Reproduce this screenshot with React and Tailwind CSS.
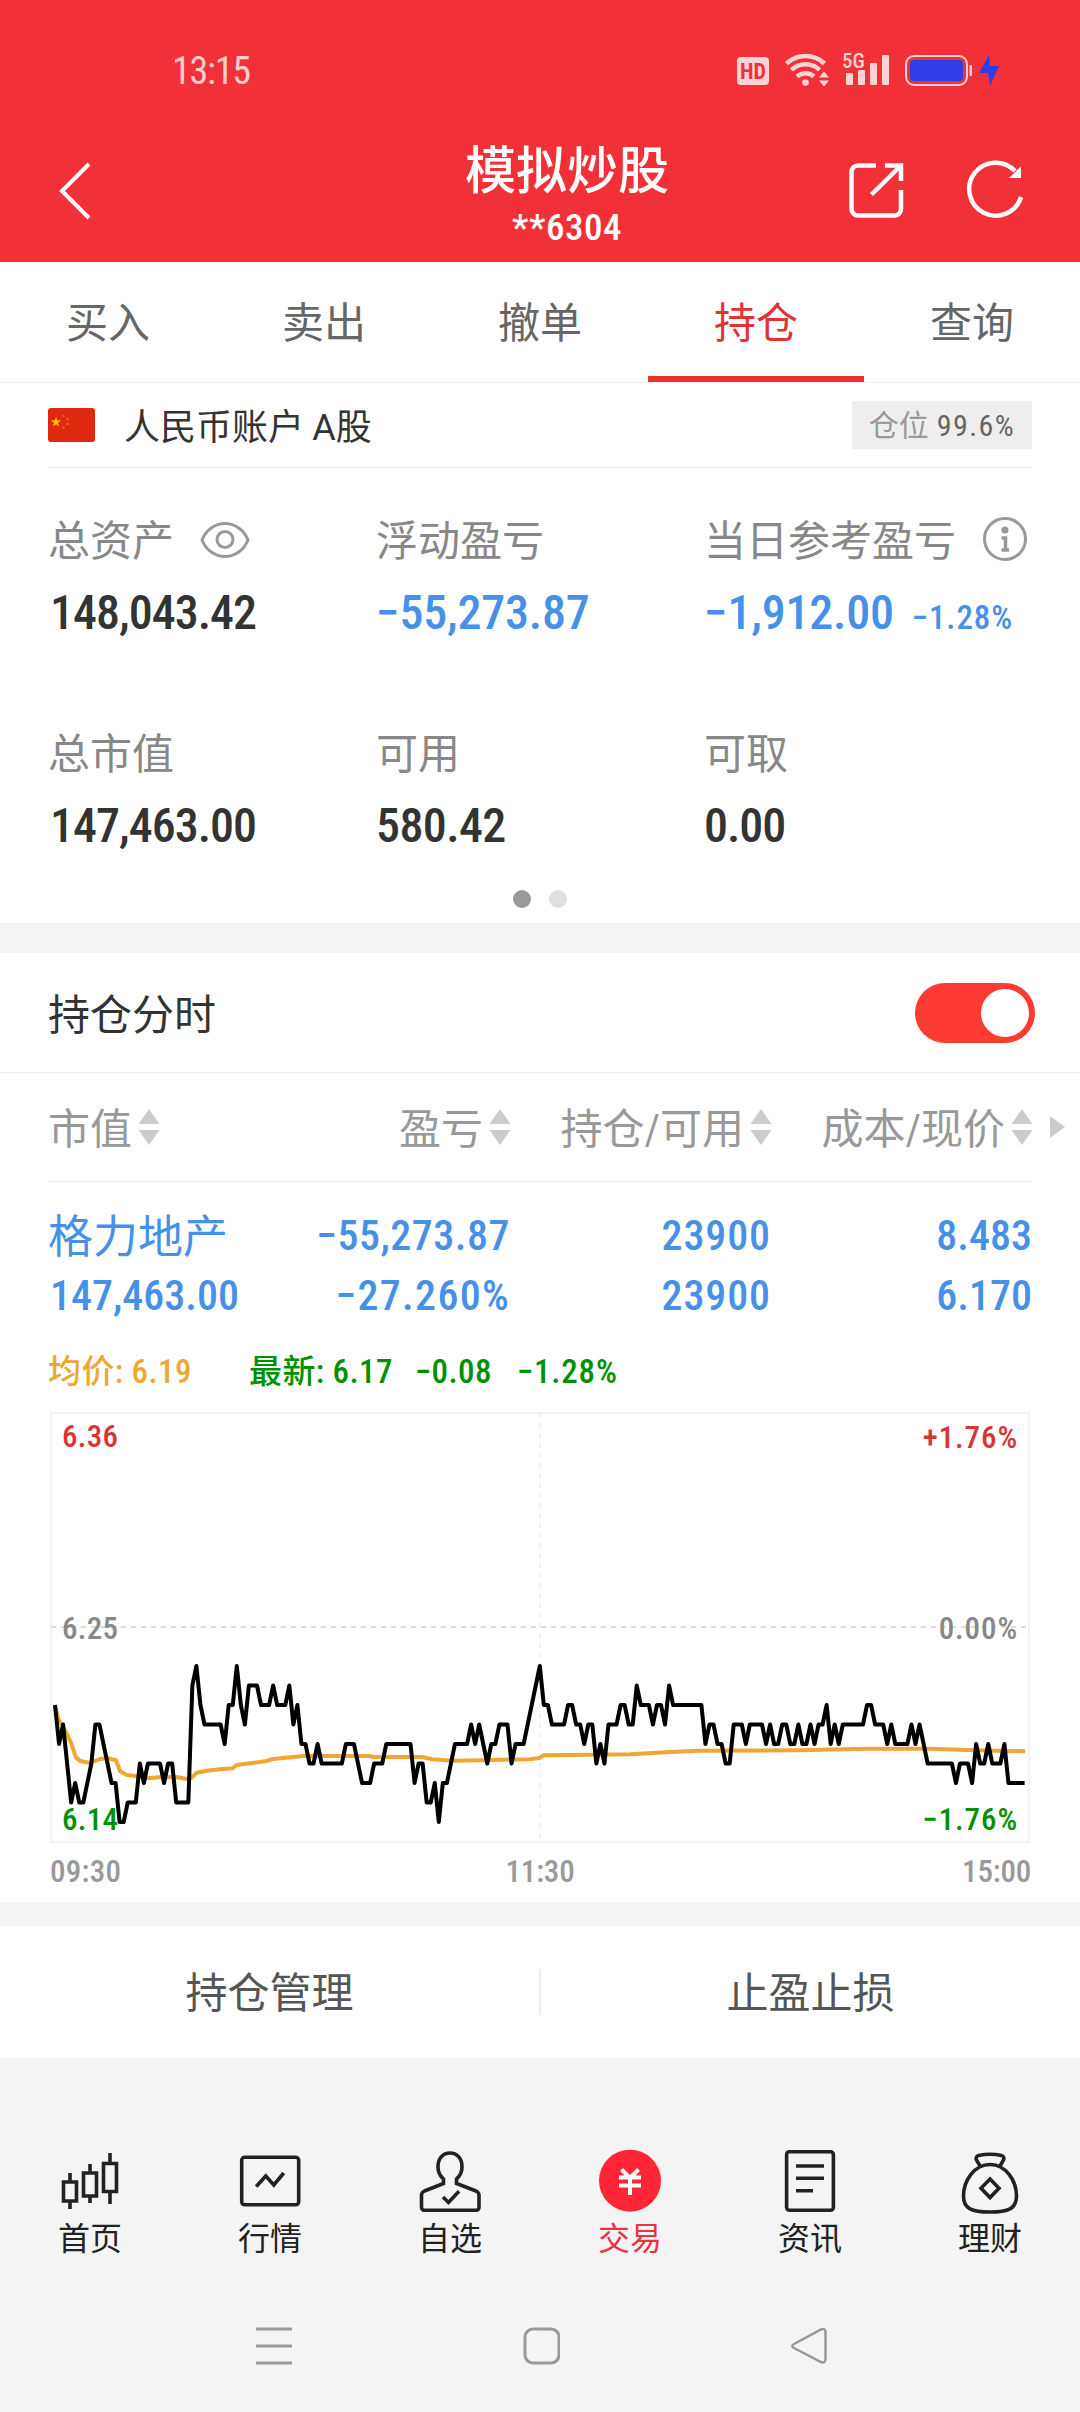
import React, { useState } from "react";

// [minute, price in cents above 6.00]
const pricePoints = [
  [0, 21], [1, 19], [2, 20], [4, 16], [5, 17], [6, 16], [7, 16], [9, 18], [10, 20], [11, 20],
  [14, 17], [15, 17], [16, 15], [17, 15], [18, 16], [20, 16], [21, 18], [22, 17], [23, 18], [26, 18],
  [27, 17], [28, 18], [29, 18], [30, 16], [33, 16], [34, 22], [35, 23], [36, 21], [37, 20], [41, 20],
  [42, 19], [43, 21], [44, 21], [45, 23], [46, 21], [47, 20], [48, 22], [50, 22], [51, 21], [53, 21],
  [54, 22], [55, 21], [57, 21], [58, 22], [59, 20], [60, 21], [61, 19], [62, 19], [63, 18], [64, 18],
  [65, 19], [66, 18], [71, 18], [72, 19], [74, 19], [76, 17], [78, 17], [79, 18], [81, 18], [82, 19],
  [88, 19], [89, 17], [90, 18], [91, 18], [92, 16], [93, 16], [94, 17], [95, 15], [96, 17], [97, 17],
  [99, 19], [102, 19], [103, 20], [104, 19], [105, 20], [107, 18], [108, 19], [109, 19], [110, 20], [112, 20],
  [113, 18], [114, 19], [116, 19], [120, 23], [121, 21], [122, 21], [123, 20], [126, 20], [127, 21], [128, 21],
  [129, 20], [130, 20], [131, 19], [132, 20], [133, 20], [134, 18], [135, 19], [136, 18], [137, 20], [139, 20],
  [140, 21], [141, 21], [142, 20], [143, 20], [144, 22], [145, 21], [147, 21], [148, 20], [149, 21], [150, 21],
  [151, 20], [152, 22], [153, 21], [160, 21], [161, 19], [162, 20], [163, 20], [164, 19], [165, 19], [166, 18],
  [167, 18], [168, 20], [170, 20], [171, 19], [172, 20], [175, 20], [176, 19], [177, 20], [178, 19], [179, 19],
  [180, 20], [181, 20], [182, 19], [183, 19], [184, 20], [185, 19], [186, 19], [187, 20], [188, 19], [189, 20],
  [190, 20], [191, 21], [192, 19], [193, 20], [194, 19], [195, 20], [200, 20], [201, 21], [202, 21], [203, 20],
  [205, 20], [206, 19], [207, 20], [208, 19], [211, 19], [212, 20], [213, 19], [214, 20], [216, 18], [222, 18],
  [223, 17], [224, 18], [226, 18], [227, 17], [228, 19], [229, 18], [230, 18], [231, 19], [232, 18], [234, 18],
  [235, 19], [236, 17], [240, 17],
];

const averageLine =
  "7,295 11,310 15,315 23,331.7 27.7,346 32,350 42,352 52,348 60.3,347.3 68,349.3 72,360 78.7,364 88,365 98.7,367.3 115.3,366 130.3,366.3 138.7,368 143.7,366.7 148.7,361.7 158.7,359.7 173.7,358 184.7,357.3 188.7,354 202,352.3 218.7,350 223.7,348.3 242,346.3 255.3,345 322,345 325.3,346 374.7,346 383.7,348.3 405.3,349.7 432,349.3 455.3,348.7 482,348.3 491.3,347 495.3,344.3 522,344 582,343.3 622,341 652,339.7 752,339.3 818.7,337.7 882,337.7 918.7,339 977,340.3";

const priceLine = pricePoints
  .map(([minute, cents]) => `${7 + minute * 4.04},${216 + (25 - cents) * 19.5}`)
  .join(" ");

const StatusBar = () => (
  <div className="flex h-[142px] items-center justify-between pl-[172px] pr-[80px]">
    <span className="text-[38px] leading-none tracking-[-1.2px] text-[#fdcdcf]">13:15</span>
    <svg width="264" height="58" viewBox="736 41 264 58" fill="#fdd3d5">
      <rect x="737" y="56" width="32" height="28" rx="4" />
      <text x="753" y="78" fontSize="22" fontWeight="700" textAnchor="middle" fill="#f23038">
        HD
      </text>
      {/* wifi */}
      <g fill="none" stroke="#fdd3d5" strokeWidth="4.5">
        <path d="M786.5 62.5a27.5 27.5 0 0 1 38 0" />
        <path d="M791.5 69a20 20 0 0 1 28 0" />
        <path d="M797 75.5a12.5 12.5 0 0 1 17 0" />
      </g>
      <circle cx="805.5" cy="81.5" r="3.3" />
      <path d="M819 76.5l5-6 5 6zM819 79.5l5 6 5-6z" />
      {/* signal */}
      <text x="842" y="67" fontSize="21" fontWeight="500">
        5G
      </text>
      <rect x="846" y="72" width="7" height="12" rx="1" />
      <rect x="858" y="69" width="7" height="15" rx="1" />
      <rect x="870" y="62" width="7" height="22" rx="1" />
      <rect x="882" y="54" width="7" height="30" rx="1" />
      {/* battery */}
      <rect x="906" y="55" width="61" height="29" rx="8" fill="none" stroke="#fdd3d5" strokeWidth="2" />
      <rect x="969.5" y="64" width="2.5" height="11" rx="1" />
      <rect x="910" y="59" width="53" height="21" rx="4" fill="#2f3fe8" />
      <path d="M989 54l-10 18h9l2 13 9-20h-9z" fill="#2f3fe8" />
    </svg>
  </div>
);

const TitleBar = () => (
  <div className="flex h-[120px]">
    <div className="w-[330px] pl-[58px] pt-[20px]">
      <svg width="34" height="58" fill="none" stroke="#fff" strokeWidth="4">
        <path d="M31 2L4 29l27 27" />
      </svg>
    </div>
    <div className="flex w-[474px] flex-col items-center text-white">
      <span className="text-[51px] font-medium leading-[60px]">模拟炒股</span>
      <span className="mt-[5px] text-[37px] font-medium leading-[42px] tracking-[0.5px]">**6304</span>
    </div>
    <div className="flex gap-[60px] pl-[43px] pt-[18px]">
      <svg width="58" height="60" viewBox="847 160 58 60" fill="none" stroke="#fff" strokeWidth="4.5">
        <path d="M876 165.5h-18a6.5 6.5 0 0 0-6.5 6.5v37a6.5 6.5 0 0 0 6.5 6.5h36.500a6.5 6.5 0 0 0 6.5-6.5v-19" />
        <path d="M885 165.5h16v15.5M900 166.5l-28.5 28" />
      </svg>
      <svg width="60" height="60" viewBox="965 160 60 60">
        <path d="M1015 171a26.5 26.5 0 1 0 6 26" fill="none" stroke="#fff" strokeWidth="4.5" />
        <path d="M1021 166.5v11.5h-12z" fill="#fff" />
      </svg>
    </div>
  </div>
);

const Tabs = () => {
  const [active, setActive] = useState("持仓");
  return (
    <div className="flex h-[121px] border-b border-[#eee]">
      {["买入", "卖出", "撤单", "持仓", "查询"].map((tab) => (
        <button
          key={tab}
          onClick={() => setActive(tab)}
          className={`flex-1 border-b-6 pt-[9px] text-[42px] ${
            active === tab ? "border-[#e93030] text-[#e03434]" : "border-transparent text-[#666]"
          }`}
        >
          {tab}
        </button>
      ))}
    </div>
  );
};

const AccountRow = () => (
  <div className="mx-[48px] flex h-[85px] items-center border-b border-[#eee]">
    <svg width="47" height="34" viewBox="0 0 47 34">
      <rect width="47" height="34" rx="3" fill="#de2910" />
      <path d="M8 9l1.300 3.500h3.700l-3 2.300 1.100 3.700L8 16.300l-3.100 2.200L6 14.800l-3-2.300h3.700z" fill="#ffc800" />
      <g fill="#f0641a">
        <circle cx="15.500" cy="8" r="1.300" />
        <circle cx="19.500" cy="11" r="1.300" />
        <circle cx="19.500" cy="16" r="1.300" />
        <circle cx="15.500" cy="19.500" r="1.300" />
      </g>
    </svg>
    <span className="ml-[29px] pt-[5px] text-[36px] text-[#333]">
      人民币账户 <span className="font-['Roboto']">A</span>股
    </span>
    <div className="ml-auto flex h-[48px] w-[180px] items-center justify-center gap-2 bg-[#eee] text-[30px]">
      <span className="text-[#999]">仓位</span>
      <span className="tracking-[1.4px] text-[#666]">99.6%</span>
    </div>
  </div>
);

const Stat = ({ label, icon, value, extra, color = "text-[#333] pl-[2px] tracking-[-1px]" }) => (
  <div className="whitespace-nowrap">
    <div className="flex h-[60px] items-center text-[42px] text-[#888]">
      <span className="pt-[2px]">{label}</span>
      {icon}
    </div>
    <div className={`mt-[13px] flex h-[59px] items-baseline text-[48px] font-medium leading-[60px] ${color}`}>
      {value}
      {extra && <span className="ml-[18px] text-[33px] tracking-[0.9px]">{extra}</span>}
    </div>
  </div>
);

const EyeIcon = () => (
  <svg className="ml-[26px]" width="50" height="38" fill="none" stroke="#999" strokeWidth="3">
    <path d="M2 19C6 9 15 2.500 25 2.500S44 9 48 19C44 29 35 35.500 25 35.500S6 29 2 19z" />
    <circle cx="25" cy="18.500" r="8" />
  </svg>
);

const InfoIcon = () => (
  <svg className="mb-[3px] ml-[26px]" width="46" height="46" fill="none" stroke="#999" strokeWidth="3">
    <circle cx="23" cy="23" r="20.500" />
    <circle cx="23" cy="14" r="3.500" fill="#999" stroke="none" />
    <path d="M19.500 22h4v12M19.500 34h7.500" strokeWidth="3.500" />
  </svg>
);

const Assets = () => (
  <div className="px-[48px] pt-[42px]">
    <div className="grid grid-cols-3 gap-y-[81px]">
      <Stat label="总资产" icon={<EyeIcon />} value="148,043.42" />
      <Stat label="浮动盈亏" value="−55,273.87" color="text-[#4790e8] tracking-[-0.2px]" />
      <Stat
        label="当日参考盈亏"
        icon={<InfoIcon />}
        value="−1,912.00"
        extra="−1.28%"
        color="text-[#4790e8] tracking-[-0.2px]"
      />
      <Stat label="总市值" value="147,463.00" />
      <Stat label="可用" value="580.42" color="text-[#333] tracking-[-0.6px]" />
      <Stat label="可取" value="0.00" color="text-[#333] tracking-[-1px]" />
    </div>
    <div className="flex justify-center gap-[18px] pb-[15px] pt-[35px]">
      <span className="size-[18px] rounded-full bg-[#999]" />
      <span className="size-[18px] rounded-full bg-[#e0e0e0]" />
    </div>
  </div>
);

const HoldingToggle = () => {
  const [on, setOn] = useState(true);
  return (
    <div className="flex h-[120px] items-center justify-between border-b border-[#eee] pl-[48px] pr-[45px]">
      <span className="pt-[5px] text-[42px] text-[#333]">持仓分时</span>
      <button
        onClick={() => setOn(!on)}
        className={`flex h-[60px] w-[120px] items-center rounded-full px-[6px] ${
          on ? "justify-end bg-[#fc3c33]" : "justify-start bg-gray-300"
        }`}
      >
        <span className="size-[48px] rounded-full bg-white" />
      </button>
    </div>
  );
};

const SortLabel = ({ children, className = "" }) => (
  <div className={`flex items-center gap-[6px] whitespace-nowrap ${className}`}>
    <span className="pt-[4px]">{children}</span>
    <svg width="22" height="36" fill="#ccc">
      <path d="M11 0l10.500 15H.5zM.5 21h21L11 36z" />
    </svg>
  </div>
);

const HoldingsTable = () => (
  <div className="pl-[48px]">
    <div className="flex h-[108px] items-center text-[42px] text-[#999]">
      <SortLabel className="w-[202px]">市值</SortLabel>
      <SortLabel className="w-[261px] justify-end">盈亏</SortLabel>
      <SortLabel className="w-[261px] justify-end">持仓/可用</SortLabel>
      <SortLabel className="w-[261px] justify-end">成本/现价</SortLabel>
      <svg className="ml-[17px]" width="16" height="22" fill="#ccc">
        <path d="M0 0l15 11L0 22z" />
      </svg>
    </div>
    <div className="mr-[48px] border-t border-[#eee] pt-[24px] text-[42px] font-medium leading-[60px] text-[#4790e8]">
      <div className="flex h-[60px]">
        <span className="w-[202px] pt-[2px] text-[45px] font-normal">格力地产</span>
        <span className="w-[260px] text-right tracking-[0.5px]">−55,273.87</span>
        <span className="w-[261px] text-right tracking-[0.9px]">23900</span>
        <span className="w-[261px] text-right">8.483</span>
      </div>
      <div className="flex h-[60px]">
        <span className="w-[202px] pl-[2px]">147,463.00</span>
        <span className="w-[260px] text-right tracking-[1.3px]">−27.260%</span>
        <span className="w-[261px] text-right tracking-[0.9px]">23900</span>
        <span className="w-[261px] text-right">6.170</span>
      </div>
    </div>
  </div>
);

const PriceChart = () => (
  <div className="px-[48px]">
    <div className="mt-[21px] flex h-[50px] items-center text-[33px] font-medium tracking-[0.4px] text-[#009000]">
      <span className="w-[201px] text-[#f0a632]">均价: 6.19</span>
      <span className="w-[166px]">最新: 6.17</span>
      <span className="w-[102px]">−0.08</span>
      <span className="tracking-[0.8px]">−1.28%</span>
    </div>
    <svg className="mt-[14px] block" width="984" height="491" fontSize="31" letterSpacing="0.3">
      <rect x="3" y="2" width="978" height="429" fill="none" stroke="#f3f3f3" strokeWidth="2" />
      <path d="M3 216h978" stroke="#ddd" strokeWidth="2" strokeDasharray="5 5" />
      <path d="M492 2v429" stroke="#f3f3f3" strokeWidth="2" strokeDasharray="5 5" />
      <g fontWeight="500">
        <text x="14" y="36" fill="#d93434">6.36</text>
        <text x="14" y="228" fill="#888">6.25</text>
        <text x="14" y="419" fill="#009000">6.14</text>
        <g textAnchor="end" letterSpacing="0.9">
          <text x="970" y="37" fill="#d93434">+1.76%</text>
          <text x="970" y="228" fill="#888">0.00%</text>
          <text x="970" y="419" fill="#009000">−1.76%</text>
        </g>
      </g>
      <polyline points={averageLine} fill="none" stroke="#f0a632" strokeWidth="4" strokeLinejoin="round" />
      <polyline points={priceLine} fill="none" stroke="#000" strokeWidth="4" strokeLinejoin="round" />
      <g fill="#999" fontWeight="500">
        <text x="2" y="471">09:30</text>
        <text x="492" y="471" textAnchor="middle" letterSpacing="-0.2">11:30</text>
        <text x="983" y="471" textAnchor="end" letterSpacing="-0.2">15:00</text>
      </g>
    </svg>
  </div>
);

const Actions = () => (
  <div className="flex h-[132px] items-center text-[42px] text-[#555]">
    <button className="flex-1 pt-[2px]">持仓管理</button>
    <span className="h-[46px] w-[2px] bg-[#eee]" />
    <button className="flex-1 pt-[2px]">止盈止损</button>
  </div>
);

const navItems = [
  {
    name: "首页",
    icon: (
      <>
        <path d="M5.500 34h13v19h-13zM12 25v9M12 53v8" />
        <path d="M25.500 25h13v23h-13zM32 16v9M32 48v7" />
        <path d="M45.500 15.500h13v28h-13zM52 5v10.500M52 43.500V56" />
      </>
    ),
  },
  {
    name: "行情",
    icon: (
      <>
        <rect x="3.700" y="9.300" width="57" height="47.500" rx="3" />
        <path d="M18.200 38.500l9.600-10.500 8 9 10-12" />
      </>
    ),
  },
  {
    name: "自选",
    icon: (
      <>
        <path d="M25.500 31C22 28 20 24 20 19 20 10 25 5 32 5s12 5 12 14c0 5-2 9-5.500 12v4.500L58 43c2 1 3 2 3 4v12c0 2-1 3.300-3 3.300H6.500c-2 0-3-1.300-3-3.300V47c0-2 1-3 3-4l19-7.500z" />
        <path d="M25 49l5.500 5.500L41 43.300" />
      </>
    ),
  },
  {
    name: "交易",
    active: true,
    icon: (
      <>
        <circle cx="32" cy="32.700" r="31" fill="#ff2638" stroke="none" />
        <path
          d="M23.500 21.500l8.500 8.500 8.500-8.500M32 30v17M21 29.500h22M21 37.500h22"
          stroke="#fff"
          strokeWidth="4"
        />
      </>
    ),
  },
  {
    name: "资讯",
    icon: (
      <>
        <rect x="8.600" y="3.700" width="46.800" height="58.600" rx="3" />
        <path d="M18 18h28M18 30.300h28M18 42.700h17" />
      </>
    ),
  },
  {
    name: "理财",
    icon: (
      <>
        <path d="M22 18l-3.500-6c-1-2 0-4 2-4.500 7-1.500 16-1.500 23 0 2 .5 3 2.500 2 4.500L42 18" />
        <path d="M32 16.500C16 16.500 5.500 33 5.500 48 5.500 61 14 64 32 64s26.500-3 26.500-16C58.500 33 48 16.500 32 16.500z" />
        <path d="M32 31l9 9.300-9 9.300-9-9.300z" />
      </>
    ),
  },
];

const BottomNav = () => (
  <div className="grid grid-cols-6 pt-[90px]">
    {navItems.map((item) => (
      <div key={item.name} className="flex flex-col items-center">
        <svg width="64" height="68" fill="none" stroke="#222" strokeWidth="3.600">
          {item.icon}
        </svg>
        <span
          className={`mt-[1px] text-[32px] leading-[44px] ${
            item.active ? "text-[#ee3040]" : "text-[#222]"
          }`}
        >
          {item.name}
        </span>
      </div>
    ))}
  </div>
);

const SystemNav = () => (
  <div className="flex justify-between pl-[256px] pr-[252px] pt-[66px]">
    <svg width="36" height="38" stroke="#999" strokeWidth="3">
      <path d="M0 2h36M0 19h36M0 36h36" />
    </svg>
    <svg width="37" height="38" fill="none" stroke="#999" strokeWidth="3">
      <rect x="2" y="2" width="34" height="34" rx="8" />
    </svg>
    <svg width="37" height="38" fill="none" stroke="#999" strokeWidth="2.500">
      <path d="M3 17L30 2.500Q34.500 1 34.500 5v27q0 4.500-4.500 3L3 21q-3.500-2 0-4z" />
    </svg>
  </div>
);

const App = () => (
  <div className="h-[2412px] w-[1080px] overflow-hidden bg-[#f4f4f4] font-['Roboto_Condensed','Noto_Sans_CJK_SC',sans-serif]">
    <div className="bg-[#f23038]">
      <StatusBar />
      <TitleBar />
    </div>
    <div className="bg-white">
      <Tabs />
      <AccountRow />
      <Assets />
    </div>
    <div className="mt-[30px] bg-white">
      <HoldingToggle />
      <HoldingsTable />
      <PriceChart />
    </div>
    <div className="mt-[24px] bg-white">
      <Actions />
    </div>
    <BottomNav />
    <SystemNav />
  </div>
);

export default App;
